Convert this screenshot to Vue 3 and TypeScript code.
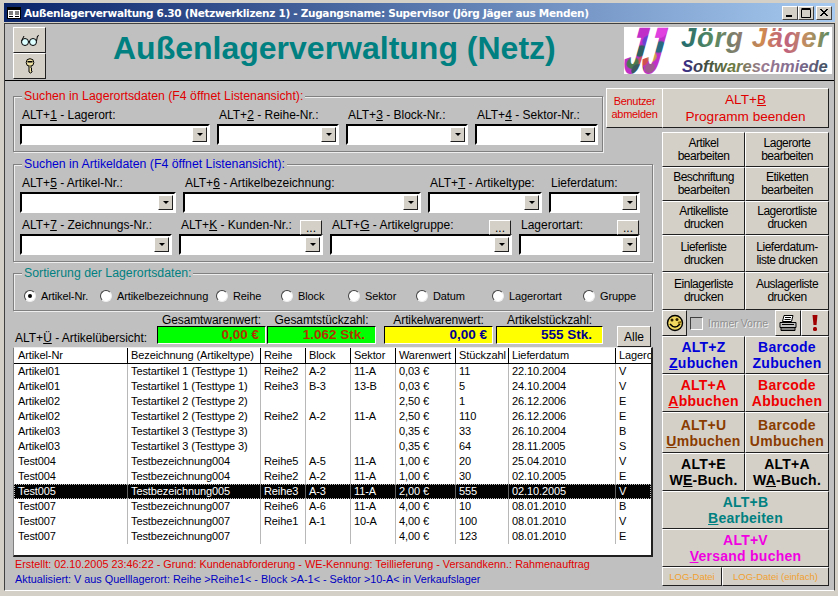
<script setup lang="ts">
interface Field { label: string; w: number; dots?: boolean }
interface Btn { a: string; b?: string; cls?: string; span?: boolean }

const split = (s: string): string[] => {
  const i = s.indexOf('_')
  if (i < 0) return [s, '', '']
  return [s.slice(0, i), s.charAt(i + 1), s.slice(i + 2)]
}

const g1: Field[] = [
  { label: 'ALT+_1 - Lagerort:', w: 190 },
  { label: 'ALT+_2 - Reihe-Nr.:', w: 122 },
  { label: 'ALT+_3 - Block-Nr.:', w: 122 },
  { label: 'ALT+_4 - Sektor-Nr.:', w: 123 }
]
const g2a: Field[] = [
  { label: 'ALT+_5 - Artikel-Nr.:', w: 156 },
  { label: 'ALT+_6 - Artikelbezeichnung:', w: 238 },
  { label: 'ALT+_T - Artikeltype:', w: 114 },
  { label: 'Lieferdatum:', w: 91 }
]
const g2b: Field[] = [
  { label: 'ALT+_7 - Zeichnungs-Nr.:', w: 152 },
  { label: 'ALT+_K - Kunden-Nr.:', w: 144, dots: true },
  { label: 'ALT+_G - Artikelgruppe:', w: 182, dots: true },
  { label: 'Lagerortart:', w: 121, dots: true }
]
const radios = [
  { t: 'Artikel-Nr.', w: 76 },
  { t: 'Artikelbezeichnung', w: 116 },
  { t: 'Reihe', w: 65 },
  { t: 'Block', w: 67 },
  { t: 'Sektor', w: 68 },
  { t: 'Datum', w: 76 },
  { t: 'Lagerortart', w: 91 },
  { t: 'Gruppe', w: 60 }
]
const totals = [
  { l: 'Gesamtwarenwert:', v: '0,00 €', w: 109, ml: 0, c: 'green', pr: 6 },
  { l: 'Gesamtstückzahl:', v: '1.062 Stk.', w: 109, ml: 1, c: 'green', pr: 10 },
  { l: 'Artikelwarenwert:', v: '0,00 €', w: 109, ml: 8, c: 'yellow', pr: 5 },
  { l: 'Artikelstückzahl:', v: '555 Stk.', w: 107, ml: 3, c: 'yellow', pr: 10 }
]
const cols = ['Artikel-Nr', 'Bezeichnung (Artikeltype)', 'Reihe', 'Block', 'Sektor', 'Warenwert', 'Stückzahl', 'Lieferdatum', 'Lagero']
const rows: string[][] = [
  ['Artikel01', 'Testartikel 1 (Testtype 1)', 'Reihe2', 'A-2', '11-A', '0,03 €', '11', '22.10.2004', 'V'],
  ['Artikel01', 'Testartikel 1 (Testtype 1)', 'Reihe3', 'B-3', '13-B', '0,03 €', '5', '24.10.2004', 'V'],
  ['Artikel02', 'Testartikel 2 (Testtype 2)', '', '', '', '2,50 €', '1', '26.12.2006', 'E'],
  ['Artikel02', 'Testartikel 2 (Testtype 2)', 'Reihe2', 'A-2', '11-A', '2,50 €', '110', '26.12.2006', 'E'],
  ['Artikel03', 'Testartikel 3 (Testtype 3)', '', '', '', '0,35 €', '33', '26.10.2004', 'B'],
  ['Artikel03', 'Testartikel 3 (Testtype 3)', '', '', '', '0,35 €', '64', '28.11.2005', 'S'],
  ['Test004', 'Testbezeichnung004', 'Reihe5', 'A-5', '11-A', '1,00 €', '20', '25.04.2010', 'V'],
  ['Test004', 'Testbezeichnung004', 'Reihe2', 'A-2', '11-A', '1,00 €', '30', '02.10.2005', 'E'],
  ['Test005', 'Testbezeichnung005', 'Reihe3', 'A-3', '11-A', '2,00 €', '555', '02.10.2005', 'V'],
  ['Test007', 'Testbezeichnung007', 'Reihe6', 'A-6', '11-A', '4,00 €', '10', '08.01.2010', 'B'],
  ['Test007', 'Testbezeichnung007', 'Reihe1', 'A-1', '10-A', '4,00 €', '100', '08.01.2010', 'V'],
  ['Test007', 'Testbezeichnung007', '', '', '', '4,00 €', '123', '08.01.2010', 'E']
]
const plainBtns: Btn[] = [
  { a: 'Artikel', b: 'bearbeiten' }, { a: 'Lagerorte', b: 'bearbeiten' },
  { a: 'Beschriftung', b: 'bearbeiten' }, { a: 'Etiketten', b: 'bearbeiten' },
  { a: 'Artikelliste', b: 'drucken' }, { a: 'Lagerortliste', b: 'drucken' },
  { a: 'Lieferliste', b: 'drucken' }, { a: 'Lieferdatum-', b: 'liste drucken' },
  { a: 'Einlagerliste', b: 'drucken' }, { a: 'Auslagerliste', b: 'drucken' }
]
const boldBtns: Btn[] = [
  { a: 'ALT+Z', b: '_Zubuchen', cls: 'blue' }, { a: 'Barcode', b: 'Zubuchen', cls: 'blue' },
  { a: 'ALT+A', b: '_Abbuchen', cls: 'red' }, { a: 'Barcode', b: 'Abbuchen', cls: 'red' },
  { a: 'ALT+U', b: '_Umbuchen', cls: 'brown' }, { a: 'Barcode', b: 'Umbuchen', cls: 'brown' },
  { a: 'ALT+E', b: 'W_E-Buch.', cls: 'black' }, { a: 'ALT+A', b: 'W_A-Buch.', cls: 'black' },
  { a: 'ALT+B', b: '_Bearbeiten', cls: 'teal', span: true },
  { a: 'ALT+V', b: '_Versand buchen', cls: 'magenta', span: true }
]
</script>

<template>
  <div class="window">
    <div class="titlebar">
      <svg class="appicon" width="14" height="14" viewBox="0 0 14 14">
        <rect x="0.5" y="1.5" width="13" height="11" fill="#fff" stroke="#000" />
        <rect x="1" y="2" width="12" height="2" fill="#000" />
        <path d="M2 6h4M2 8h4M2 10.500h4M8 6h4M8 8h4M8 10.500h4" stroke="#000" />
      </svg>
      <span class="title">Außenlagerverwaltung 6.30 (Netzwerklizenz 1) - Zugangsname: Supervisor (Jörg Jäger aus Menden)</span>
      <div class="caps">
        <button class="cap"><svg width="10" height="10" viewBox="0 0 10 10"><rect x="1" y="7" width="6" height="2" fill="#000" /></svg></button>
        <button class="cap"><svg width="10" height="10" viewBox="0 0 10 10"><path d="M0.500 1.500h9v8h-9z M0.500 0.500h9" fill="none" stroke="#000" /></svg></button>
        <button class="cap closecap"><svg width="10" height="10" viewBox="0 0 10 10"><path d="M1 1l7 7M2 1l7 7M8 1l-7 7M9 1l-7 7" stroke="#000" /></svg></button>
      </div>
    </div>
    <div class="client">
      <header class="header">
        <div class="headbtns">
          <button class="raised headbtn">
            <svg width="20" height="14" viewBox="0 0 20 14">
              <circle cx="5" cy="9" r="3.500" fill="#dff" stroke="#000" />
              <circle cx="13" cy="9" r="3.500" fill="#dff" stroke="#000" />
              <path d="M8.500 8.500q1-1 1 0M1.500 8L4 3M16.500 8l1-5q.5-1 1.500 0" fill="none" stroke="#000" />
            </svg>
          </button>
          <button class="raised headbtn">
            <svg width="12" height="16" viewBox="0 0 12 16">
              <circle cx="6" cy="4.500" r="3.800" fill="#eee0a0" stroke="#000" />
              <rect x="3.500" y="3" width="5" height="1.500" fill="#000" />
              <path d="M5 8v6l1.500 1 1.500-1v-1l-1-1 1-1-1-1V8" fill="#eee0a0" stroke="#000" />
            </svg>
          </button>
        </div>
        <h1 class="apptitle">Außenlagerverwaltung (Netz)</h1>
        <svg class="logo" width="208" height="47" viewBox="0 0 208 47">
          <defs>
            <pattern id="mott" x="0" y="0" width="44" height="47" patternUnits="userSpaceOnUse">
              <rect width="44" height="47" fill="#c030c8" />
              <circle cx="30" cy="4" r="7" fill="#e040e0" />
              <circle cx="20" cy="14" r="6" fill="#6a40d0" />
              <circle cx="32" cy="20" r="6" fill="#2a6a80" />
              <circle cx="14" cy="24" r="6" fill="#2f5f60" />
              <circle cx="26" cy="30" r="5" fill="#c8a050" />
              <circle cx="18" cy="34" r="5" fill="#d05050" />
              <circle cx="8" cy="36" r="6" fill="#4a7a50" />
              <circle cx="14" cy="43" r="6" fill="#3a5a60" />
              <circle cx="26" cy="41" r="5" fill="#a05a90" />
            </pattern>
            <linearGradient id="jg" x1="0" y1="0" x2="1" y2="0">
              <stop offset="0" stop-color="#206a70" />
              <stop offset="0.220" stop-color="#5a8a60" />
              <stop offset="0.400" stop-color="#8a7a70" />
              <stop offset="0.550" stop-color="#d08a50" />
              <stop offset="0.700" stop-color="#c06080" />
              <stop offset="0.850" stop-color="#c09060" />
              <stop offset="1" stop-color="#5a8a60" />
            </linearGradient>
            <linearGradient id="sw" x1="0" y1="0" x2="1" y2="0">
              <stop offset="0" stop-color="#3a2a90" />
              <stop offset="0.150" stop-color="#404a40" />
              <stop offset="0.350" stop-color="#6a7a40" />
              <stop offset="0.550" stop-color="#9a7a90" />
              <stop offset="0.800" stop-color="#806a90" />
              <stop offset="1" stop-color="#405060" />
            </linearGradient>
          </defs>
          <rect width="208" height="47" fill="#fff" />
          <text class="logoj" transform="translate(7 0) skewX(-10)" x="0" y="45" textLength="36" lengthAdjust="spacingAndGlyphs" fill="url(#mott)" stroke="url(#mott)" stroke-width="3">JJ</text>
          <text class="logoa" x="57" y="20" fill="url(#jg)">Jörg Jäger</text>
          <text class="logob" x="58" y="45" fill="url(#sw)">Softwareschmiede</text>
        </svg>
      </header>
      <div class="main">
        <div class="leftcol">
          <div class="toprow">
            <section class="group group1">
              <span class="legend lred">Suchen in Lagerortsdaten (F4 öffnet Listenansicht):</span>
              <div class="fields">
                <div v-for="f in g1" :key="f.label" class="field" :style="{ width: f.w + 'px' }">
                  <div class="flabel"><span>{{ split(f.label)[0] }}<u>{{ split(f.label)[1] }}</u>{{ split(f.label)[2] }}</span></div>
                  <div class="combo"><span class="arrow"><i></i></span></div>
                </div>
              </div>
            </section>
            <button class="raised logout">Benutzer<br />abmelden</button>
          </div>
          <section class="group group2">
            <span class="legend lblue">Suchen in Artikeldaten (F4 öffnet Listenansicht):</span>
            <div class="fields">
              <div v-for="f in g2a" :key="f.label" class="field" :style="{ width: f.w + 'px' }">
                <div class="flabel"><span>{{ split(f.label)[0] }}<u>{{ split(f.label)[1] }}</u>{{ split(f.label)[2] }}</span></div>
                <div class="combo"><span class="arrow"><i></i></span></div>
              </div>
            </div>
            <div class="fields row2">
              <div v-for="f in g2b" :key="f.label" class="field" :style="{ width: f.w + 'px' }">
                <div class="flabel">
                  <span>{{ split(f.label)[0] }}<u>{{ split(f.label)[1] }}</u>{{ split(f.label)[2] }}</span>
                  <button v-if="f.dots" class="raised dots">...</button>
                </div>
                <div class="combo"><span class="arrow"><i></i></span></div>
              </div>
            </div>
          </section>
          <section class="group group3">
            <span class="legend lteal">Sortierung der Lagerortsdaten:</span>
            <div class="radios">
              <label v-for="(r, i) in radios" :key="r.t" class="radio" :style="{ width: r.w + 'px' }">
                <span class="rdot" :class="{ on: i === 0 }"></span>{{ r.t }}
              </label>
            </div>
          </section>
          <div class="totals">
            <div class="tlabel">ALT+<u>Ü</u> - Artikelübersicht:</div>
            <div v-for="t in totals" :key="t.l" class="total" :style="{ width: t.w + 'px', marginLeft: t.ml + 'px' }">
              <div class="tcap">{{ t.l }}</div>
              <div class="tval" :class="t.c" :style="{ paddingRight: t.pr + 'px' }">{{ t.v }}</div>
            </div>
            <button class="raised alle">Alle</button>
          </div>
          <div class="list">
            <div class="lrow lhead">
              <div v-for="c in cols" :key="c" class="cell">{{ c }}</div>
            </div>
            <div v-for="(r, i) in rows" :key="i" class="lrow" :class="{ sel: i === 8 }">
              <div v-for="(c, j) in r" :key="j" class="cell">{{ c }}</div>
            </div>
          </div>
          <div class="status">
            <div class="sred">Erstellt: 02.10.2005 23:46:22 - Grund: Kundenabforderung - WE-Kennung: Teillieferung - Versandkenn.: Rahmenauftrag</div>
            <div class="sblue">Aktualisiert: V aus Quelllagerort: Reihe &gt;Reihe1&lt; - Block &gt;A-1&lt; - Sektor &gt;10-A&lt; in Verkaufslager</div>
          </div>
        </div>
        <div class="rightcol">
          <button class="raised quit">ALT+<u>B</u><br />Programm beenden</button>
          <div class="btngrid">
            <button v-for="b in plainBtns" :key="b.a" class="raised plain">{{ b.a }}<br />{{ b.b }}</button>
            <div class="tools">
              <button class="raised tool t1">
                <svg width="18" height="18" viewBox="0 0 18 18">
                  <circle cx="9" cy="9" r="7.500" fill="#f0d860" stroke="#000" stroke-width="1.400" />
                  <circle cx="6" cy="6" r="1.500" fill="#302000" />
                  <circle cx="11" cy="5.500" r="1.500" fill="#302000" />
                  <path d="M4 10q5 6 10 0" fill="none" stroke="#000" stroke-width="1.500" />
                  <path d="M12 9l3-1" stroke="#806000" stroke-width="2" />
                </svg>
              </button>
              <label class="immer"><span class="chk"></span><span class="dis">Immer Vorne</span></label>
              <button class="raised tool t2">
                <svg width="18" height="18" viewBox="0 0 18 18">
                  <path d="M5 1.500h9l-1.500 6h-9z" fill="#fff" stroke="#000" />
                  <path d="M1 8.500h16v5H1z" fill="#c0c0c0" stroke="#000" />
                  <path d="M2 13.500l0 3h14v-3z" fill="#808080" stroke="#000" />
                  <path d="M6 3.500h6M5.500 5.500h6M3 10.500h12" stroke="#000" />
                </svg>
              </button>
              <button class="raised tool t3">
                <svg width="8" height="18" viewBox="0 0 8 18">
                  <path d="M1.500 1h5l-1 10h-3z" fill="#a00000" />
                  <rect x="2" y="13" width="4" height="4" rx="1.500" fill="#a00000" />
                </svg>
              </button>
            </div>
            <button v-for="b in boldBtns" :key="b.a + b.b" class="raised bold" :class="[b.cls, { span: b.span }]">
              {{ b.a }}<br />{{ split(b.b || '')[0] }}<u>{{ split(b.b || '')[1] }}</u>{{ split(b.b || '')[2] }}
            </button>
            <div class="logs">
              <button class="raised log l1">LOG-Datei</button>
              <button class="raised log l2">LOG-Datei (einfach)</button>
            </div>
          </div>
        </div>
      </div>
    </div>
  </div>
</template>

<style scoped>
.window {
  width: 838px;
  height: 596px;
  box-sizing: border-box;
  padding: 3px 3px 5px 4px;
  background: #d4d0c8;
  display: flex;
  flex-direction: column;
  font-family: "Liberation Sans", Arial, sans-serif;
  font-size: 12px;
  color: #000;
  overflow: hidden;
}
button {
  font-family: inherit;
  padding: 0;
  margin: 0;
  cursor: default;
}
.titlebar {
  height: 19px;
  flex: none;
  display: flex;
  align-items: center;
  padding: 0 3px 0 3px;
  background: linear-gradient(90deg, #0a246a, #a6caf0);
  color: #fff;
  font-family: "DejaVu Sans", sans-serif;
  font-weight: 700;
  font-size: 10.500px;
  white-space: nowrap;
}
.appicon { flex: none; margin-right: 3px; }
.title { flex: 1; letter-spacing: -0.3px; }
.caps { display: flex; flex: none; }
.cap {
  width: 16px;
  height: 14px;
  background: #d4d0c8;
  border: 1px solid;
  border-color: #fff #404040 #404040 #fff;
  display: flex;
  align-items: center;
  justify-content: center;
}
.closecap { margin-left: 2px; }
.client {
  flex: 1;
  margin-top: 1px;
  background: #c0c0c0;
  border: 1px solid;
  border-color: #404040 #404040 #fff #404040;
  box-shadow: 0 0 0 1px #d4d0c8;
  display: flex;
  flex-direction: column;
  min-height: 0;
}
.raised {
  background: #d4d0c8;
  border: 1px solid;
  border-color: #fff #202020 #202020 #fff;
  box-sizing: border-box;
  color: #000;
}
.header {
  height: 57px;
  flex: none;
  box-sizing: border-box;
  border-bottom: 1px solid #000;
  display: flex;
  padding: 3px 0 0 8px;
}
.headbtns { width: 33px; display: flex; flex-direction: column; }
.headbtn {
  width: 33px;
  height: 26px;
  display: flex;
  align-items: center;
  justify-content: center;
}
.apptitle {
  margin: 1px 0 0 67px;
  font-size: 32px;
  line-height: 40px;
  font-weight: 700;
  color: #008080;
  white-space: nowrap;
  width: 444px;
  flex: none;
}
.logo { margin-left: 67px; flex: none; }
.logoj {
  font: italic 700 62px "Liberation Sans", sans-serif;
}
.logoa {
  font: italic 700 27.500px "Liberation Sans", sans-serif;
  letter-spacing: 0.7px;
}
.logob {
  font: italic 700 16.500px "Liberation Sans", sans-serif;
}
.main {
  flex: 1;
  display: flex;
  min-height: 0;
}
.leftcol {
  width: 657px;
  flex: none;
  box-sizing: border-box;
  padding: 7px 0 0 8px;
  display: flex;
  flex-direction: column;
}
.toprow { display: flex; height: 64px; flex: none; align-items: flex-start; }
.group {
  position: relative;
  box-sizing: border-box;
  border: 1px solid #808080;
  box-shadow: 1px 1px 0 #eee, inset 1px 1px 0 #eee;
  flex: none;
  padding-left: 6px;
}
.group1 { width: 590px; height: 56px; margin-top: 8px; padding-top: 11px; }
.group2 { width: 640px; height: 98px; margin-top: 12px; padding-top: 11px; }
.group3 { width: 640px; height: 38px; margin-top: 11px; }
.legend {
  position: absolute;
  left: 8px;
  top: -8px;
  padding: 0 2px;
  background: #c0c0c0;
  font-size: 12.300px;
  line-height: 15px;
  white-space: nowrap;
}
.lred { color: #e00000; }
.lblue { color: #0000d0; }
.lteal { color: #008080; }
.fields { display: flex; gap: 7px; }
.row2 { margin-top: 5px; }
.field { flex: none; }
.flabel {
  height: 16px;
  display: flex;
  justify-content: space-between;
  padding-left: 2px;
  font-size: 12px;
  line-height: 15px;
  white-space: nowrap;
}
.dots {
  width: 22px;
  height: 15px;
  margin: 2px 1px 0 0;
  flex: none;
  font-size: 12px;
  line-height: 8px;
  position: relative;
  z-index: 1;
}
.combo {
  height: 21px;
  box-sizing: border-box;
  background: #fff;
  border: 2px solid;
  border-color: #000 #fff #fff #000;
  display: flex;
  justify-content: flex-end;
  align-items: center;
  padding-right: 1px;
}
.arrow {
  width: 15px;
  height: 15px;
  box-sizing: border-box;
  background: #d4d0c8;
  border: 1px solid;
  border-color: #fff #202020 #202020 #fff;
  display: flex;
  align-items: center;
  justify-content: center;
}
.arrow i {
  width: 0;
  height: 0;
  border-left: 3px solid transparent;
  border-right: 3px solid transparent;
  border-top: 3px solid #000;
}
.logout {
  width: 57px;
  height: 40px;
  margin-left: 3px;
  color: #e00000;
  font-size: 11px;
  line-height: 13px;
  letter-spacing: -0.3px;
  flex: none;
}
.radios {
  display: flex;
  height: 36px;
  align-items: center;
  padding: 7px 0 0 4px;
  box-sizing: border-box;
}
.radio {
  flex: none;
  display: flex;
  align-items: center;
  font-size: 11px;
  letter-spacing: -0.1px;
  white-space: nowrap;
}
.rdot {
  width: 12px;
  height: 12px;
  margin-right: 5px;
  flex: none;
  box-sizing: border-box;
  border-radius: 50%;
  background: #fff;
  border: 1px solid;
  border-color: #404040 #eee #eee #404040;
  display: flex;
  align-items: center;
  justify-content: center;
}
.rdot.on::after {
  content: "";
  width: 4px;
  height: 4px;
  border-radius: 50%;
  background: #000;
}
.totals {
  height: 36px;
  flex: none;
  display: flex;
  align-items: flex-start;
  padding-top: 2px;
  box-sizing: border-box;
}
.tlabel {
  width: 144px;
  flex: none;
  padding: 17px 0 0 2px;
  box-sizing: border-box;
  font-size: 12px;
  line-height: 16px;
  white-space: nowrap;
}
.total { flex: none; text-align: center; }
.tcap {
  height: 13px;
  font-size: 12px;
  letter-spacing: -0.1px;
  line-height: 14px;
  white-space: nowrap;
}
.tval {
  height: 18px;
  box-sizing: border-box;
  border: 1px solid;
  border-color: #000 #fff #fff #000;
  text-align: right;
  font-weight: 700;
  font-size: 13.500px;
  line-height: 16px;
  white-space: nowrap;
}
.green { background: #00ff00; color: #b03400; }
.yellow { background: #ffff00; color: #000090; }
.alle {
  width: 34px;
  height: 21px;
  margin: 13px 0 0 14px;
  font-size: 12px;
  flex: none;
}
.list {
  width: 640px;
  height: 210px;
  flex: none;
  box-sizing: border-box;
  background: #fff;
  border: 1px solid;
  border-color: #eee #202020 #202020 #808080;
  border-width: 1px 2px 2px 1px;
  overflow: hidden;
}
.lrow {
  display: grid;
  grid-template-columns: 113px 133px 45px 45px 45px 60px 53px 107px 36px;
  height: 15px;
  padding-left: 1px;
  line-height: 15px;
  white-space: nowrap;
  font-size: 11px;
  letter-spacing: -0.1px;
}
.cell {
  box-sizing: border-box;
  padding-left: 3px;
  border-right: 1px solid #b8b8b8;
  overflow: hidden;
}
.cell:last-child { border-right: 0; }
.lhead {
  border-bottom: 1px solid #000;
}
.lhead .cell { border-right-color: #000; }
.sel {
  background: #000;
  color: #fff;
  outline: 1px dotted #c0c0c0;
  outline-offset: -1px;
}
.sel .cell { border-right-color: #606060; }
.status {
  flex: none;
  padding-left: 2px;
  font-size: 10.850px;
  line-height: 15px;
  white-space: nowrap;
}
.sred { color: #e00000; }
.sblue { color: #0000c0; }
.rightcol {
  width: 167px;
  flex: none;
  padding-top: 7px;
}
.quit {
  display: block;
  width: 167px;
  height: 40px;
  margin-bottom: 4px;
  color: #e00000;
  font-size: 13.600px;
  line-height: 17px;
}
.btngrid {
  display: grid;
  grid-template-columns: 83px 84px;
  grid-template-rows: 35px 34px 34px 37px 38px 26px 38px 38px 41px 38px 38px 38px 19px;
}
.plain { font-size: 12px; line-height: 13px; letter-spacing: -0.5px; }
.tools, .logs { grid-column: 1 / -1; display: flex; }
.tool {
  height: 26px;
  display: flex;
  align-items: center;
  justify-content: center;
  flex: none;
}
.t1 { width: 25px; }
.t2 { width: 26px; }
.t3 { width: 28px; }
.immer {
  width: 88px;
  flex: none;
  display: flex;
  align-items: center;
  padding-left: 3px;
  box-sizing: border-box;
  font-size: 10.500px;
  white-space: nowrap;
}
.chk {
  width: 13px;
  height: 13px;
  flex: none;
  margin-right: 5px;
  box-sizing: border-box;
  border: 1px solid;
  border-color: #404040 #fff #fff #404040;
  background: #c0c0c0;
}
.dis { color: #8f8f8f; text-shadow: 1px 1px 0 #f0f0f0; }
.bold {
  font-weight: 700;
  font-size: 14px;
  line-height: 16px;
  letter-spacing: 0.25px;
}
.span { grid-column: 1 / -1; }
.blue { color: #0000d8; }
.red { color: #ee0000; }
.brown { color: #8a3c00; }
.black { color: #000; }
.teal { color: #008080; }
.magenta { color: #f000e0; }
.log {
  height: 19px;
  color: #f0a030;
  font-size: 9.500px;
  line-height: 14px;
  white-space: nowrap;
}
.l1 { width: 60px; }
.l2 { width: 107px; }
</style>
